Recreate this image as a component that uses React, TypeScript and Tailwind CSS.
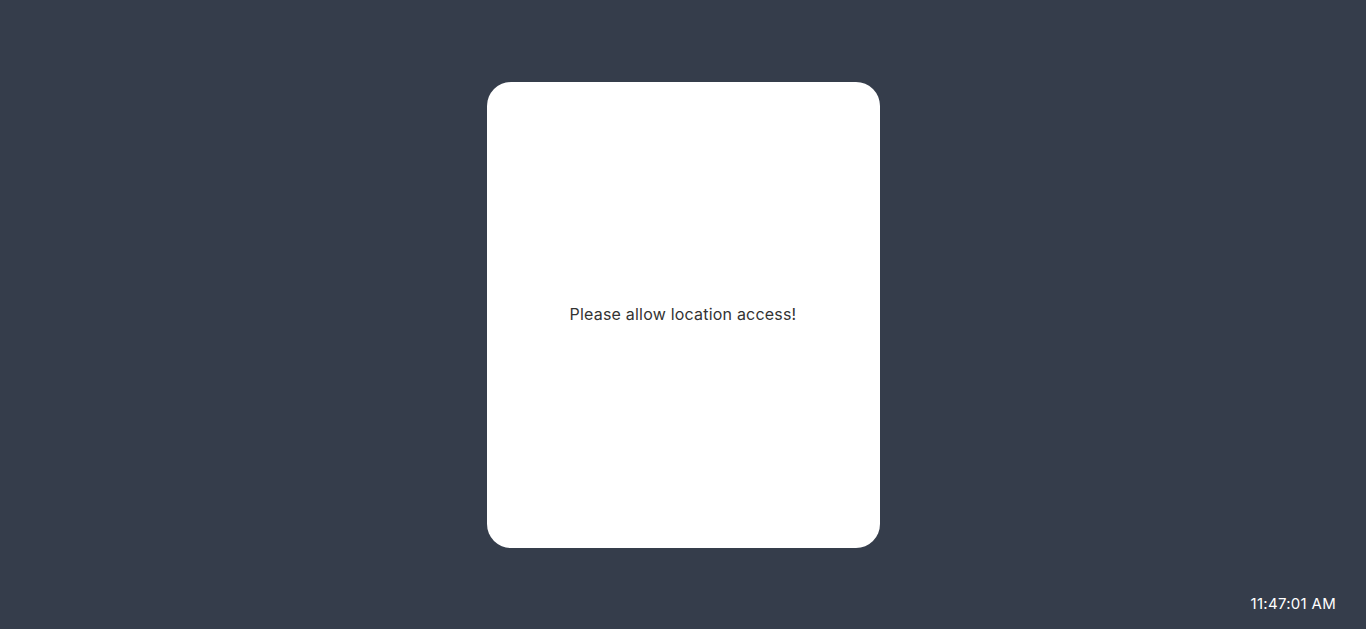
export default function App() {
  return (
    <div className="relative h-screen w-full bg-[#353d4b] flex items-center justify-center font-['Inter','Liberation_Sans',sans-serif]">
      <div className="w-[393px] h-[466px] bg-white rounded-3xl flex items-center justify-center">
        <p className="text-[16px] text-[#333] tracking-[0.2px] -mt-[2px]">Please allow location access!</p>
      </div>
      <div className="absolute right-[30px] bottom-[14px] text-white text-[15px] tracking-[0.3px]">11:47:01 AM</div>
    </div>
  );
}
